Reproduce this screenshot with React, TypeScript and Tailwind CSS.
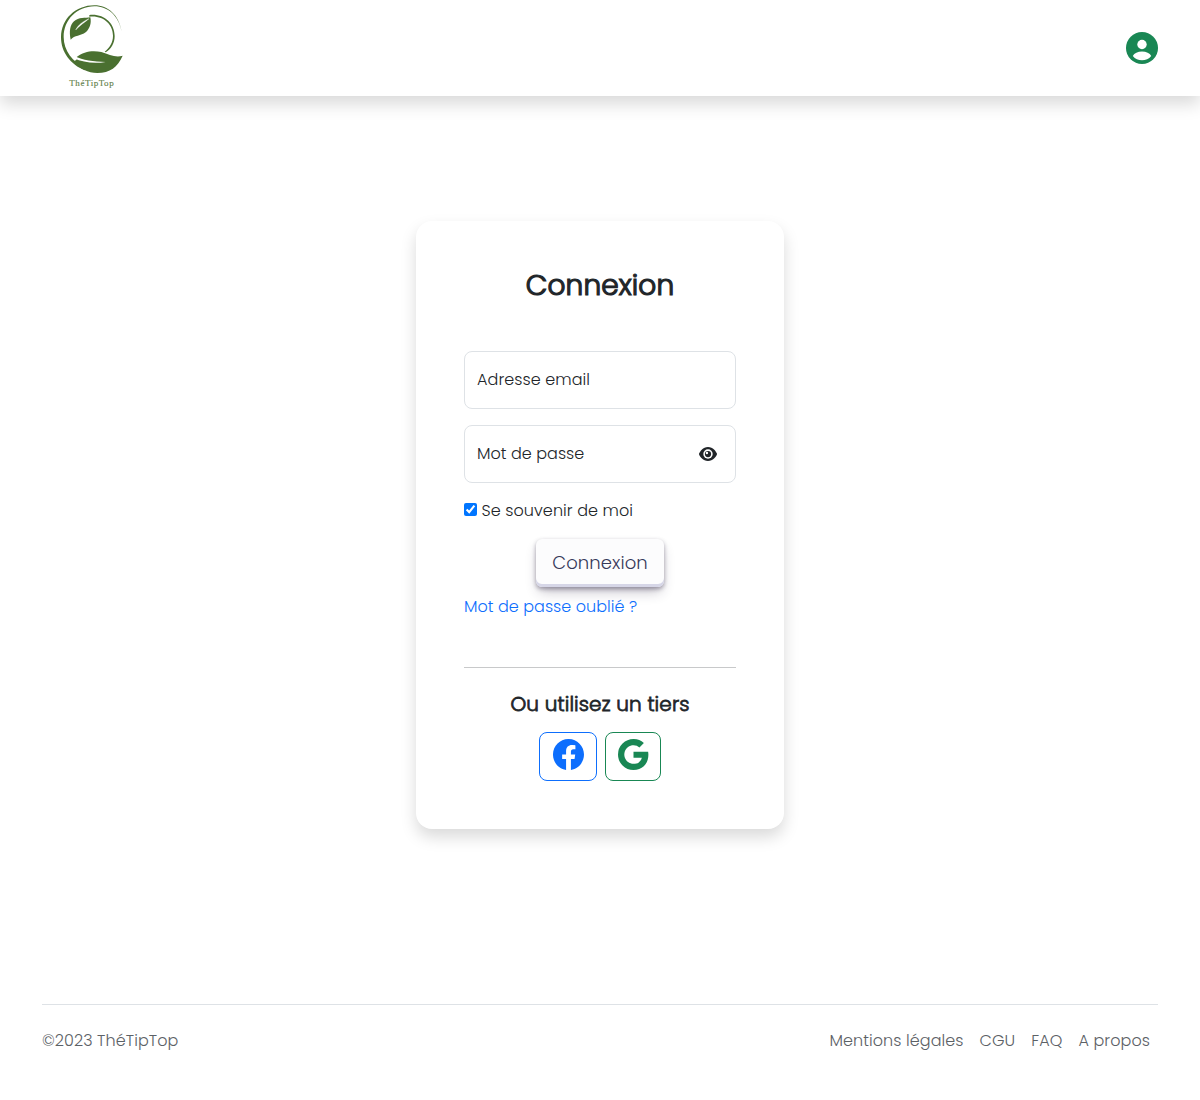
import { BsFacebook, BsGoogle } from "react-icons/bs";

function Logo() {
  return (
    <svg width="110" height="96" viewBox="0 0 330 288" fill="#4a7030" role="img" aria-label="ThéTipTop">
      <path d="M245 94C236 45 205 16 163 16C107 16 63 57 63 112C63 157 92 194 134 211L137 203C98 187 71 152 71 111C71 59 111 20 163 19C204 19 235 47 245 94Z" />
      <path d="M148 45C190 40 224 68 224 108C224 130 213 147 197 157L194 155C209 143 219 127 219 107C219 73 190 45 148 50Z" />
      <path d="M92 119C87 94 90 75 102 64C116 51 136 55 151 52C155 70 149 87 137 97C123 108 103 106 92 119Z" />
      <path d="M107 90C114 75 129 64 147 56C136 66 120 75 107 90Z" fill="#fff" stroke="#fff" strokeWidth="1" />
      <path d="M110 171C130 154 159 150 184 156C208 163 226 174 248 167C233 201 210 219 172 219C143 218 121 207 102 185L112 176Z" />
      <path d="M104 169C128 180 161 186 197 186C162 192 128 187 102 175Z" fill="#fff" />
      <text x="88" y="258" fontSize="27" textLength="133" lengthAdjust="spacing" fontFamily="Liberation Serif, serif" fill="#5f8049" stroke="#5f8049" strokeWidth="0.4">
        ThéTipTop
      </text>
    </svg>
  );
}

function AccountIcon() {
  return (
    <svg width="32" height="32" viewBox="0 0 32 32" role="img" aria-label="Compte">
      <circle cx="16" cy="16" r="16" fill="#198754" />
      <circle cx="16" cy="12.5" r="4.7" fill="#fff" />
      <path d="M6.8 24C8.2 21.2 11.8 19.6 16 19.6S23.8 21.2 25.2 24C23 26.9 19.6 28.3 16 28.3S9 26.9 6.8 24Z" fill="#fff" />
    </svg>
  );
}

function EyeIcon() {
  return (
    <svg width="18" height="16" viewBox="0 0 576 512" fill="currentColor" aria-hidden="true">
      <path d="M480.6 112.6C527.4 156 558.7 207.1 573.5 243.7C576.8 251.6 576.8 260.4 573.5 268.3C558.7 304 527.4 355.1 480.6 399.4C433.5 443.2 368.8 480 288 480C207.2 480 142.5 443.2 95.42 399.4C48.62 355.1 17.34 304 2.461 268.3C-.8205 260.4-.8205 251.6 2.461 243.7C17.34 207.1 48.62 156 95.42 112.6C142.5 68.84 207.2 32 288 32C368.8 32 433.5 68.84 480.6 112.6z" />
      <circle cx="288" cy="256" r="150" fill="#fff" />
      <circle cx="288" cy="256" r="100" />
      <circle cx="254" cy="222" r="38" fill="#fff" />
    </svg>
  );
}

export default function App() {
  return (
    <div className="flex h-[1100px] flex-col bg-white font-['Poppins','Inter',sans-serif] text-base font-light tracking-[0.08px] text-[#212529]">
      <header className="flex h-24 shrink-0 items-center justify-between bg-white pr-[42px] pl-10 shadow-[0_8px_16px_rgba(0,0,0,0.15)]">
        <Logo />
        <AccountIcon />
      </header>

      <main className="flex flex-1 flex-col items-center pt-[125px]">
        <section className="flex h-[608px] w-[368px] flex-col rounded-2xl bg-white px-12 pt-12 shadow-[0_8px_16px_rgba(0,0,0,0.15)]">
          <h1 className="text-center text-[28px] leading-[34px] font-light tracking-[0.12px] whitespace-nowrap [-webkit-text-stroke:1.2px_#212529]">
            Connexion
          </h1>
          <div className="mt-12 flex h-[58px] shrink-0 items-center rounded-lg border border-[#dee2e6] px-3">
            <span className="whitespace-nowrap">Adresse email</span>
          </div>
          <div className="mt-4 flex h-[58px] shrink-0 items-center justify-between rounded-lg border border-[#dee2e6] pr-[18px] pl-3">
            <span className="tracking-[0.04px] whitespace-nowrap">Mot de passe</span>
            <EyeIcon />
          </div>
          <label className="mt-4 flex h-6 items-center gap-[4.5px]">
            <input type="checkbox" defaultChecked className="mb-[3px] size-[13px]" />
            <span className="whitespace-nowrap">Se souvenir de moi</span>
          </label>
          <button className="mt-4 h-12 w-32 shrink-0 self-center rounded-md bg-[#fcfcfd] text-lg leading-none font-light whitespace-nowrap text-[#36395a] shadow-[0_2px_4px_rgba(45,35,66,0.4),0_7px_13px_-3px_rgba(45,35,66,0.3),inset_0_-3px_0_#d6d6e7]">
            Connexion
          </button>
          <a href="#" className="mt-2 h-6 self-start tracking-[0.04px] whitespace-nowrap text-[#0d6efd]">Mot de passe oublié ?</a>
          <hr className="mt-12 border-[#c8c9ca]" />
          <h2 className="mt-6 text-center text-xl leading-6 font-light tracking-[0.12px] whitespace-nowrap [-webkit-text-stroke:0.8px_#212529]">
            Ou utilisez un tiers
          </h2>
          <div className="mt-4 flex justify-center gap-2">
            <button aria-label="Facebook" className="flex h-[49px] w-[58px] justify-center rounded-lg border border-[#0d6efd] pt-1.5 text-[#0d6efd]">
              <BsFacebook size={31} />
            </button>
            <button aria-label="Google" className="flex h-[49px] w-14 justify-center rounded-lg border border-[#198754] pt-1.5 pl-px text-[#198754]">
              <BsGoogle size={31} />
            </button>
          </div>
        </section>
      </main>

      <footer className="mx-[42px] flex h-24 shrink-0 items-start justify-between border-t border-[#dee2e6] pt-6 pr-2 text-[#5c6166]">
        <span className="whitespace-nowrap">©2023 ThéTipTop</span>
        <nav className="flex gap-4 whitespace-nowrap">
          <a href="#">Mentions légales</a>
          <a href="#">CGU</a>
          <a href="#">FAQ</a>
          <a href="#">A propos</a>
        </nav>
      </footer>
    </div>
  );
}
